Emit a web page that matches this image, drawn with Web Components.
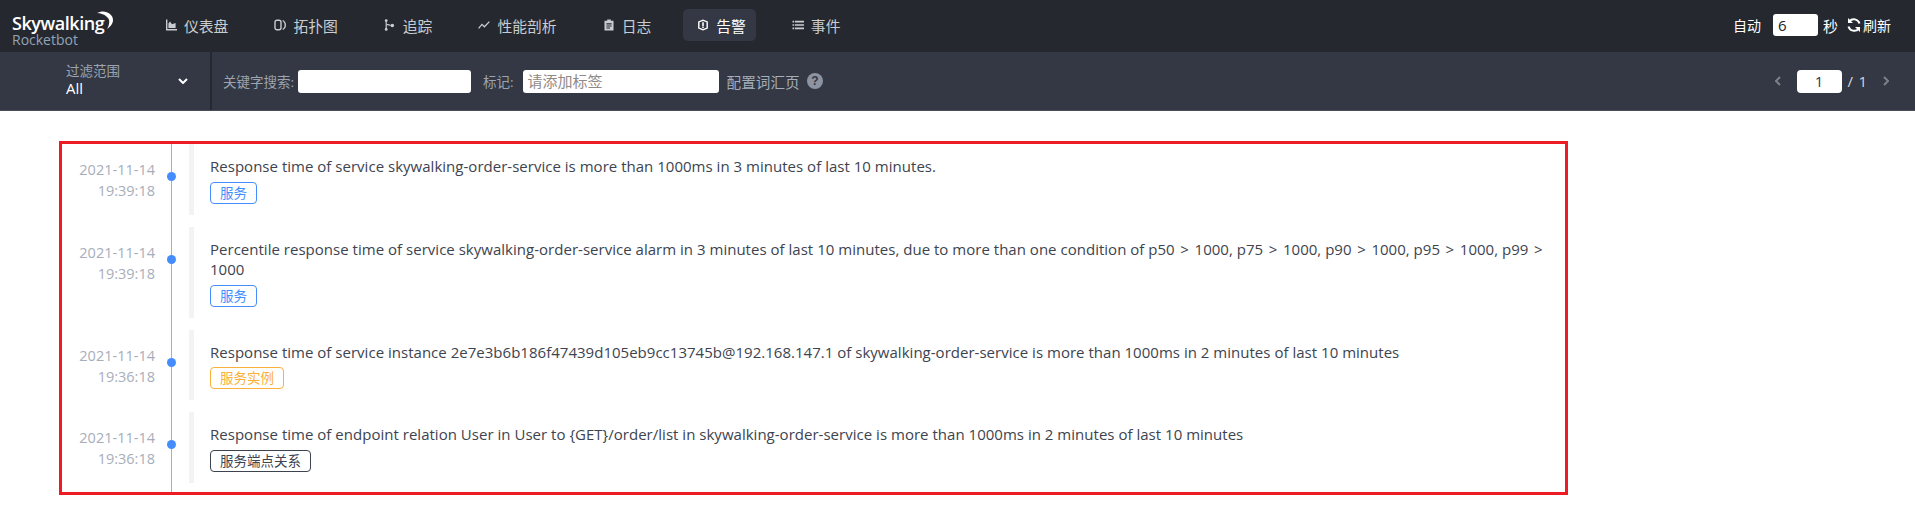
<!DOCTYPE html>
<html>
<head>
<meta charset="utf-8">
<title>Rocketbot</title>
<style>
html,body{margin:0;padding:0;background:#fff;}
body{font-family:"Open Sans","Noto Sans CJK SC",sans-serif;}
.gt{margin:0 1.7px;}
</style>
</head>
<body>
<sw-topbar>
    <sw-nav-item icon="dashboard">仪表盘</sw-nav-item>
    <sw-nav-item icon="topology">拓扑图</sw-nav-item>
    <sw-nav-item icon="trace">追踪</sw-nav-item>
    <sw-nav-item icon="profile">性能剖析</sw-nav-item>
    <sw-nav-item icon="log">日志</sw-nav-item>
    <sw-nav-item icon="alarm" active>告警</sw-nav-item>
    <sw-nav-item icon="event">事件</sw-nav-item>
</sw-topbar>
<sw-toolbar></sw-toolbar>
<sw-alarm-list>
    <sw-alarm-item date="2021-11-14" time="19:39:18" tag="服务" kind="service">Response time of service skywalking-order-service is more than 1000ms in 3 minutes of last 10 minutes.</sw-alarm-item>
    <sw-alarm-item date="2021-11-14" time="19:39:18" tag="服务" kind="service">Percentile response time of service skywalking-order-service alarm in 3 minutes of last 10 minutes, due to more than one condition of p50 <span class="gt">&gt;</span> 1000, p75 <span class="gt">&gt;</span> 1000, p90 <span class="gt">&gt;</span> 1000, p95 <span class="gt">&gt;</span> 1000, p99 <span class="gt">&gt;</span> 1000</sw-alarm-item>
    <sw-alarm-item date="2021-11-14" time="19:36:18" tag="服务实例" kind="instance">Response time of service instance 2e7e3b6b186f47439d105eb9cc13745b@192.168.147.1 of skywalking-order-service is more than 1000ms in 2 minutes of last 10 minutes</sw-alarm-item>
    <sw-alarm-item date="2021-11-14" time="19:36:18" tag="服务端点关系" kind="relation">Response time of endpoint relation User in User to {GET}/order/list in skywalking-order-service is more than 1000ms in 2 minutes of last 10 minutes</sw-alarm-item>
</sw-alarm-list>
<script>
const FONT = '"Open Sans","Noto Sans CJK SC",sans-serif'

const ICONS = {
    dashboard: '<path d="M1 0.5h1.4v9.6H12v1.4H1z"/><path d="M3.4 9V4.5L5 2.6l2 2.6 3.6-1.2V9z"/>',
    topology: '<rect x="1" y="1.2" width="6" height="9.6" rx="2" fill="none" stroke="currentColor" stroke-width="1.4"/><path d="M9 1c2 1 3 3 3 5s-1 4-3 5l-.6-1c1.500-.9 2.200-2.400 2.200-4s-.7-3.100-2.200-4z"/>',
    trace: '<path d="M1.600 1h1.200v10H1.600z"/><circle cx="2.200" cy="1.600" r="1.400"/><circle cx="2.200" cy="10.400" r="1.400"/><path d="M2.600 5c1.800 0 3 .5 4 .9v1.200c-1-.4-2.200-.9-4-.9z"/><circle cx="8.300" cy="6.500" r="1.800"/>',
    profile: '<path fill="none" stroke="currentColor" stroke-width="1.300" d="M.6 9.400l3.400-4 2.400 2.400L11.400 2.600"/>',
    log: '<path fill-rule="evenodd" d="M1.500 1.800h2.700V.4h3.600v1.400h2.700V11.600h-9zM3.400 4.200v1.200h5.200V4.200zM3.400 6.400v1.200h5.200V6.400zM3.400 8.400v1.200h3.600V8.400z"/>',
    alarm: '<path fill-rule="evenodd" d="M6 .4 10.900 2.400V9.600L6 11.600 1.100 9.600V2.400zM6 1.900 2.500 3.300v5.400L6 10.100l3.500-1.400V3.300z"/><path d="M5.200 3.200h1.600v3.800H5.200zM5.200 7.600h1.600v1.300H5.200z"/>',
    event: '<path d="M.5 1.800h1.500v1.600H.5zM2.800 1.800H12v1.600H2.800zM.5 5.200h1.500v1.600H.5zM2.800 5.200H12v1.600H2.800zM.5 8.600h1.500v1.600H.5zM2.800 8.600H12v1.600H2.800z"/>'
}

class SwNavItem extends HTMLElement{
    constructor(){
        super()
        this.attachShadow({mode:'open'})
    }
    connectedCallback(){
        this.shadowRoot.innerHTML = `
        <style>
            :host{
                display:flex;
                align-items:center;
                height:32px;
                padding:0 10px 0 14px;
                border-radius:5px;
                color:#c9ccd0;
                font-size:14.8px;
                white-space:nowrap;
            }
            :host([active]){
                background:#333844;
                color:#fff;
            }
            svg{width:12px;height:12px;fill:currentColor;margin-right:7px;flex:none;}
        </style>
        <svg viewBox="0 0 12 12">${ICONS[this.getAttribute('icon')]}</svg><slot></slot>
        `
    }
}

class SwTopbar extends HTMLElement{
    constructor(){
        super()
        this.attachShadow({mode:'open'})
        this.shadowRoot.innerHTML = `
        <style>
            :host{
                display:flex;
                align-items:center;
                box-sizing:border-box;
                height:52px;
                padding:0 24px 2px 12px;
                background:#25292f;
                color:#fff;
                font-family:${FONT};
            }
            .logo{width:139px;flex:none;align-self:flex-start;margin-top:14px;position:relative;}
            .sky{display:block;font-size:18px;font-weight:600;line-height:18px;letter-spacing:-.45px;color:#fff;}
            .rb{display:block;font-size:14px;line-height:15px;color:#93a3b5;}
            .moon{position:absolute;left:80px;top:-6px;width:24px;height:24px;}
            nav{display:flex;align-items:center;flex:1;}
            ::slotted(sw-nav-item){margin-right:22px;}
            .right{display:flex;align-items:center;font-size:14px;}
            .num{
                box-sizing:border-box;
                width:45px;height:22px;
                margin:0 5px 0 12px;
                padding-left:5px;
                background:#fff;border-radius:3px;
                color:#222;font-size:15px;line-height:22px;
            }
            .sec{margin-right:8px;font-size:15px;}
            .refresh{width:16px;height:16px;margin-right:1px;fill:none;stroke:#fff;stroke-width:2;}
        </style>
        <div class="logo">
            <span class="sky">Skywalking</span>
            <span class="rb">Rocketbot</span>
            <svg class="moon" viewBox="92 8 24 24"><path fill="#fff" d="M97 13C104 9 113 13 113 20C113 24 110 27 107 29C110 24 110 19 107 17C104 14 100 13 97 13Z"/></svg>
        </div>
        <nav><slot></slot></nav>
        <div class="right">
            <span>自动</span>
            <span class="num">6</span>
            <span class="sec">秒</span>
            <svg class="refresh" viewBox="0 0 16 16"><path d="M13.5 6.500A6 6 0 0 0 3.300 4.200M2.500 9.500A6 6 0 0 0 12.700 11.800"/><path stroke="none" fill="#fff" d="M2 1v5h5zM14 15v-5H9z"/></svg>
            <span>刷新</span>
        </div>
        `
    }
}

class SwToolbar extends HTMLElement{
    constructor(){
        super()
        this.attachShadow({mode:'open'})
        this.shadowRoot.innerHTML = `
        <style>
            :host{
                display:flex;
                align-items:stretch;
                box-sizing:border-box;
                height:59px;
                background:#333844;
                border-bottom:1px solid #4a4f5a;
                color:#9ca4af;
                font-family:${FONT};
                font-size:13.5px;
            }
            .scope{
                box-sizing:border-box;
                width:212px;
                padding:0 22px 0 66px;
                display:flex;
                align-items:center;
                justify-content:space-between;
                border-right:2px solid #25292f;
            }
            .scope div{margin-top:-2px;}
            .scope b{display:block;font-weight:400;line-height:17px;}
            .scope i{display:block;font-style:normal;color:#fff;font-size:15px;line-height:17px;}
            .filters{flex:1;display:flex;align-items:center;padding-left:11px;}
            .box{
                box-sizing:border-box;
                height:23px;
                background:#fff;
                border-radius:3px;
                font-size:15px;
                line-height:23px;
                color:#8f8a86;
            }
            .kw{width:173px;margin:0 12px 0 4px;}
            .tag{width:196px;margin:0 8px 0 9px;padding-left:5px;}
            .vocab{font-size:14.6px;color:#a4adba;}
            .help{width:16px;height:16px;margin-left:7px;}
            .pager{display:flex;align-items:center;padding-right:26px;color:#d4d7dc;font-size:15px;word-spacing:1.5px;}
            .page{
                box-sizing:border-box;
                width:45px;height:23px;
                margin:0 6px 0 16px;
                background:#fff;border-radius:4px;
                color:#183b56;text-align:center;line-height:23px;
            }
            .pager svg{width:6px;height:10px;fill:none;stroke:#7c7f86;stroke-width:2;}
            .pager svg:last-child{margin-left:16px;}
            .arrow{width:10px;height:6px;fill:none;stroke:#fff;stroke-width:2;}
        </style>
        <div class="scope">
            <div><b>过滤范围</b><i>All</i></div>
            <svg class="arrow" viewBox="0 0 10 6"><path d="M1 1l4 4 4-4"/></svg>
        </div>
        <div class="filters">
            <span>关键字搜索:</span><div class="box kw"></div>
            <span>标记:</span><div class="box tag">请添加标签</div>
            <span class="vocab">配置词汇页</span>
            <svg class="help" viewBox="0 0 16 16"><circle cx="8" cy="8" r="8" fill="#8d93a0"/><text x="8" y="12.2" text-anchor="middle" font-size="12" font-weight="700" fill="#333844" font-family="Liberation Sans">?</text></svg>
        </div>
        <div class="pager">
            <svg viewBox="0 0 6 10"><path d="M5 1 1 5l4 4"/></svg>
            <div class="page">1</div>
            <span>/ 1</span>
            <svg viewBox="0 0 6 10"><path d="M1 1l4 4-4 4"/></svg>
        </div>
        `
    }
}

class SwAlarmList extends HTMLElement{
    constructor(){
        super()
        this.attachShadow({mode:'open'})
        this.shadowRoot.innerHTML = `
        <style>
            :host{
                display:block;
                box-sizing:border-box;
                width:1509px;
                height:354px;
                margin:30px 0 0 59px;
                border:3px solid #ed1c24;
                font-family:${FONT};
            }
            .list{display:flex;flex-direction:column;gap:12px;height:100%;position:relative;}
            .line{position:absolute;left:109px;top:0;bottom:0;width:1px;background:#8ab4f8;}
        </style>
        <div class="list"><div class="line"></div><slot></slot></div>
        `
    }
}

class SwAlarmItem extends HTMLElement{
    constructor(){
        super()
        this.attachShadow({mode:'open'})
    }
    connectedCallback(){
        const colors = {service:'#448dfe',instance:'#fbb03b',relation:'#3d444f'}
        const c = colors[this.getAttribute('kind')]
        this.shadowRoot.innerHTML = `
        <style>
            :host{display:flex;align-items:stretch;position:relative;}
            .time{
                box-sizing:border-box;
                width:93px;
                flex:none;
                padding-top:15px;
                text-align:right;
                font-size:14.5px;
                line-height:21px;
                color:#a7aebb;
                white-space:nowrap;
            }
            .dot{
                width:9px;height:9px;
                border-radius:50%;
                background:#448dfe;
                position:absolute;left:105px;top:28px;
            }
            .body{
                flex:1;
                margin-left:34px;
                padding:12px 16px 11px 16px;
                border-left:5px solid #f3f3f3;
                color:#3d444f;
                font-size:15px;
                letter-spacing:.02px;
                line-height:20.5px;
            }
            .tag{
                display:inline-block;
                box-sizing:border-box;
                height:22px;
                margin-top:5px;
                padding:0 9px;
                border:1px solid ${c};
                border-radius:4px;
                color:${c};
                font-size:13.5px;
                line-height:20px;
                vertical-align:top;
            }
        </style>
        <div class="time">${this.getAttribute('date')}<br>${this.getAttribute('time')}</div>
        <div class="dot"></div>
        <div class="body"><div><slot></slot></div><span class="tag">${this.getAttribute('tag')}</span></div>
        `
    }
}

window.customElements.define('sw-nav-item',SwNavItem)
window.customElements.define('sw-topbar',SwTopbar)
window.customElements.define('sw-toolbar',SwToolbar)
window.customElements.define('sw-alarm-list',SwAlarmList)
window.customElements.define('sw-alarm-item',SwAlarmItem)
</script>
</body>
</html>
